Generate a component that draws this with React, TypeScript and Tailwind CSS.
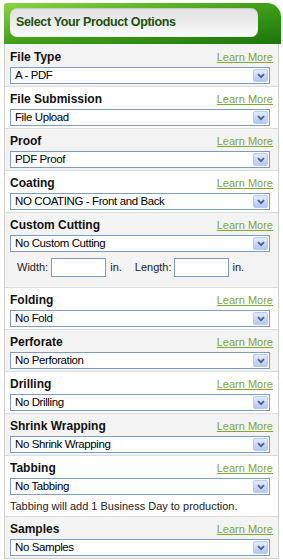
import React from 'react';

type Row = {
  label: string;
  value: string;
  sizes?: boolean;
  note?: string;
};

const rows: Row[] = [
  { label: 'File Type', value: 'A - PDF' },
  { label: 'File Submission', value: 'File Upload' },
  { label: 'Proof', value: 'PDF Proof' },
  { label: 'Coating', value: 'NO COATING - Front and Back' },
  { label: 'Custom Cutting', value: 'No Custom Cutting', sizes: true },
  { label: 'Folding', value: 'No Fold' },
  { label: 'Perforate', value: 'No Perforation' },
  { label: 'Drilling', value: 'No Drilling' },
  { label: 'Shrink Wrapping', value: 'No Shrink Wrapping' },
  { label: 'Tabbing', value: 'No Tabbing', note: 'Tabbing will add 1 Business Day to production.' },
  { label: 'Samples', value: 'No Samples' },
];

function Dropdown({ value }: { value: string }) {
  return (
    <div className="flex h-[17px] w-[260px] items-center justify-between border border-[#7f9db9] bg-white pl-[4px] pr-[1px]">
      <span className="text-[11.5px] leading-[15px] tracking-[-0.4px] text-black">{value}</span>
      <span className="flex h-[13px] w-[15px] items-center justify-center rounded-[2px] border border-[#b8cbf1] bg-gradient-to-b from-[#e2eafd] to-[#b4c8f4]">
        <svg width="8" height="6" viewBox="0 0 8 6">
          <path d="M1 1.2 L4 4.2 L7 1.2" fill="none" stroke="#4d6185" strokeWidth="1.8" />
        </svg>
      </span>
    </div>
  );
}

export default function App() {
  return (
    <div className="w-[283px] bg-white pl-[4px] font-['Liberation_Sans',Arial,sans-serif]">
      {/* green title bar */}
      <div className="relative h-[44px] w-[277px] pt-[3px]">
        <div className="h-[41px] w-full rounded-tl-[3px] rounded-tr-[14px] bg-gradient-to-br from-[#8ad63f] via-[#3f9f1a] to-[#1a7609] px-[6px] pt-[5px]">
          <div className="flex h-[29px] w-[248px] items-center rounded-[7px] bg-gradient-to-b from-[#e2e2e2] via-[#ececec] to-[#fbfbfb] pl-[6px] shadow-[inset_0_1px_1px_rgba(0,0,0,0.12)]">
            <span className="text-[12.5px] font-bold tracking-[-0.35px] text-[#24500f]">Select Your Product Options</span>
          </div>
        </div>
      </div>

      <div className="w-[275px] border-x border-b border-[#d0d0d0]">
        {rows.map((row, i) => (
          <div
            key={row.label}
            className={`${i === 0 ? 'pt-[4px]' : 'border-t border-[#dcdcdc] pt-[3px]'} ${
              i % 2 === 0 ? 'bg-[#f3f3f3]' : 'bg-white'
            } ${row.sizes ? 'pb-[10px]' : row.note ? 'pb-[3px]' : 'pb-[2px]'} px-[5px]`}
          >
            <div className="flex h-[18px] items-center justify-between">
              <span className="text-[12px] font-bold text-[#111]">{row.label}</span>
              <a href="#" className="text-[11px] text-[#83a633] underline">
                Learn More
              </a>
            </div>
            <div className="mt-[1px]">
              <Dropdown value={row.value} />
            </div>
            {row.sizes && (
              <div className="ml-[7px] mt-[6px] flex h-[19px] items-center text-[11px] text-[#222]">
                <span>Width:</span>
                <span className="ml-[3px] h-[19px] w-[55px] border border-[#7f9db9] bg-white" />
                <span className="ml-[4px]">in.</span>
                <span className="ml-[13px]">Length:</span>
                <span className="ml-[2px] h-[19px] w-[55px] border border-[#7f9db9] bg-white" />
                <span className="ml-[4px]">in.</span>
              </div>
            )}
            {row.note && (
              <div className="mt-[4px] text-[11px] leading-[14px] text-[#222]">{row.note}</div>
            )}
          </div>
        ))}
      </div>
    </div>
  );
}
